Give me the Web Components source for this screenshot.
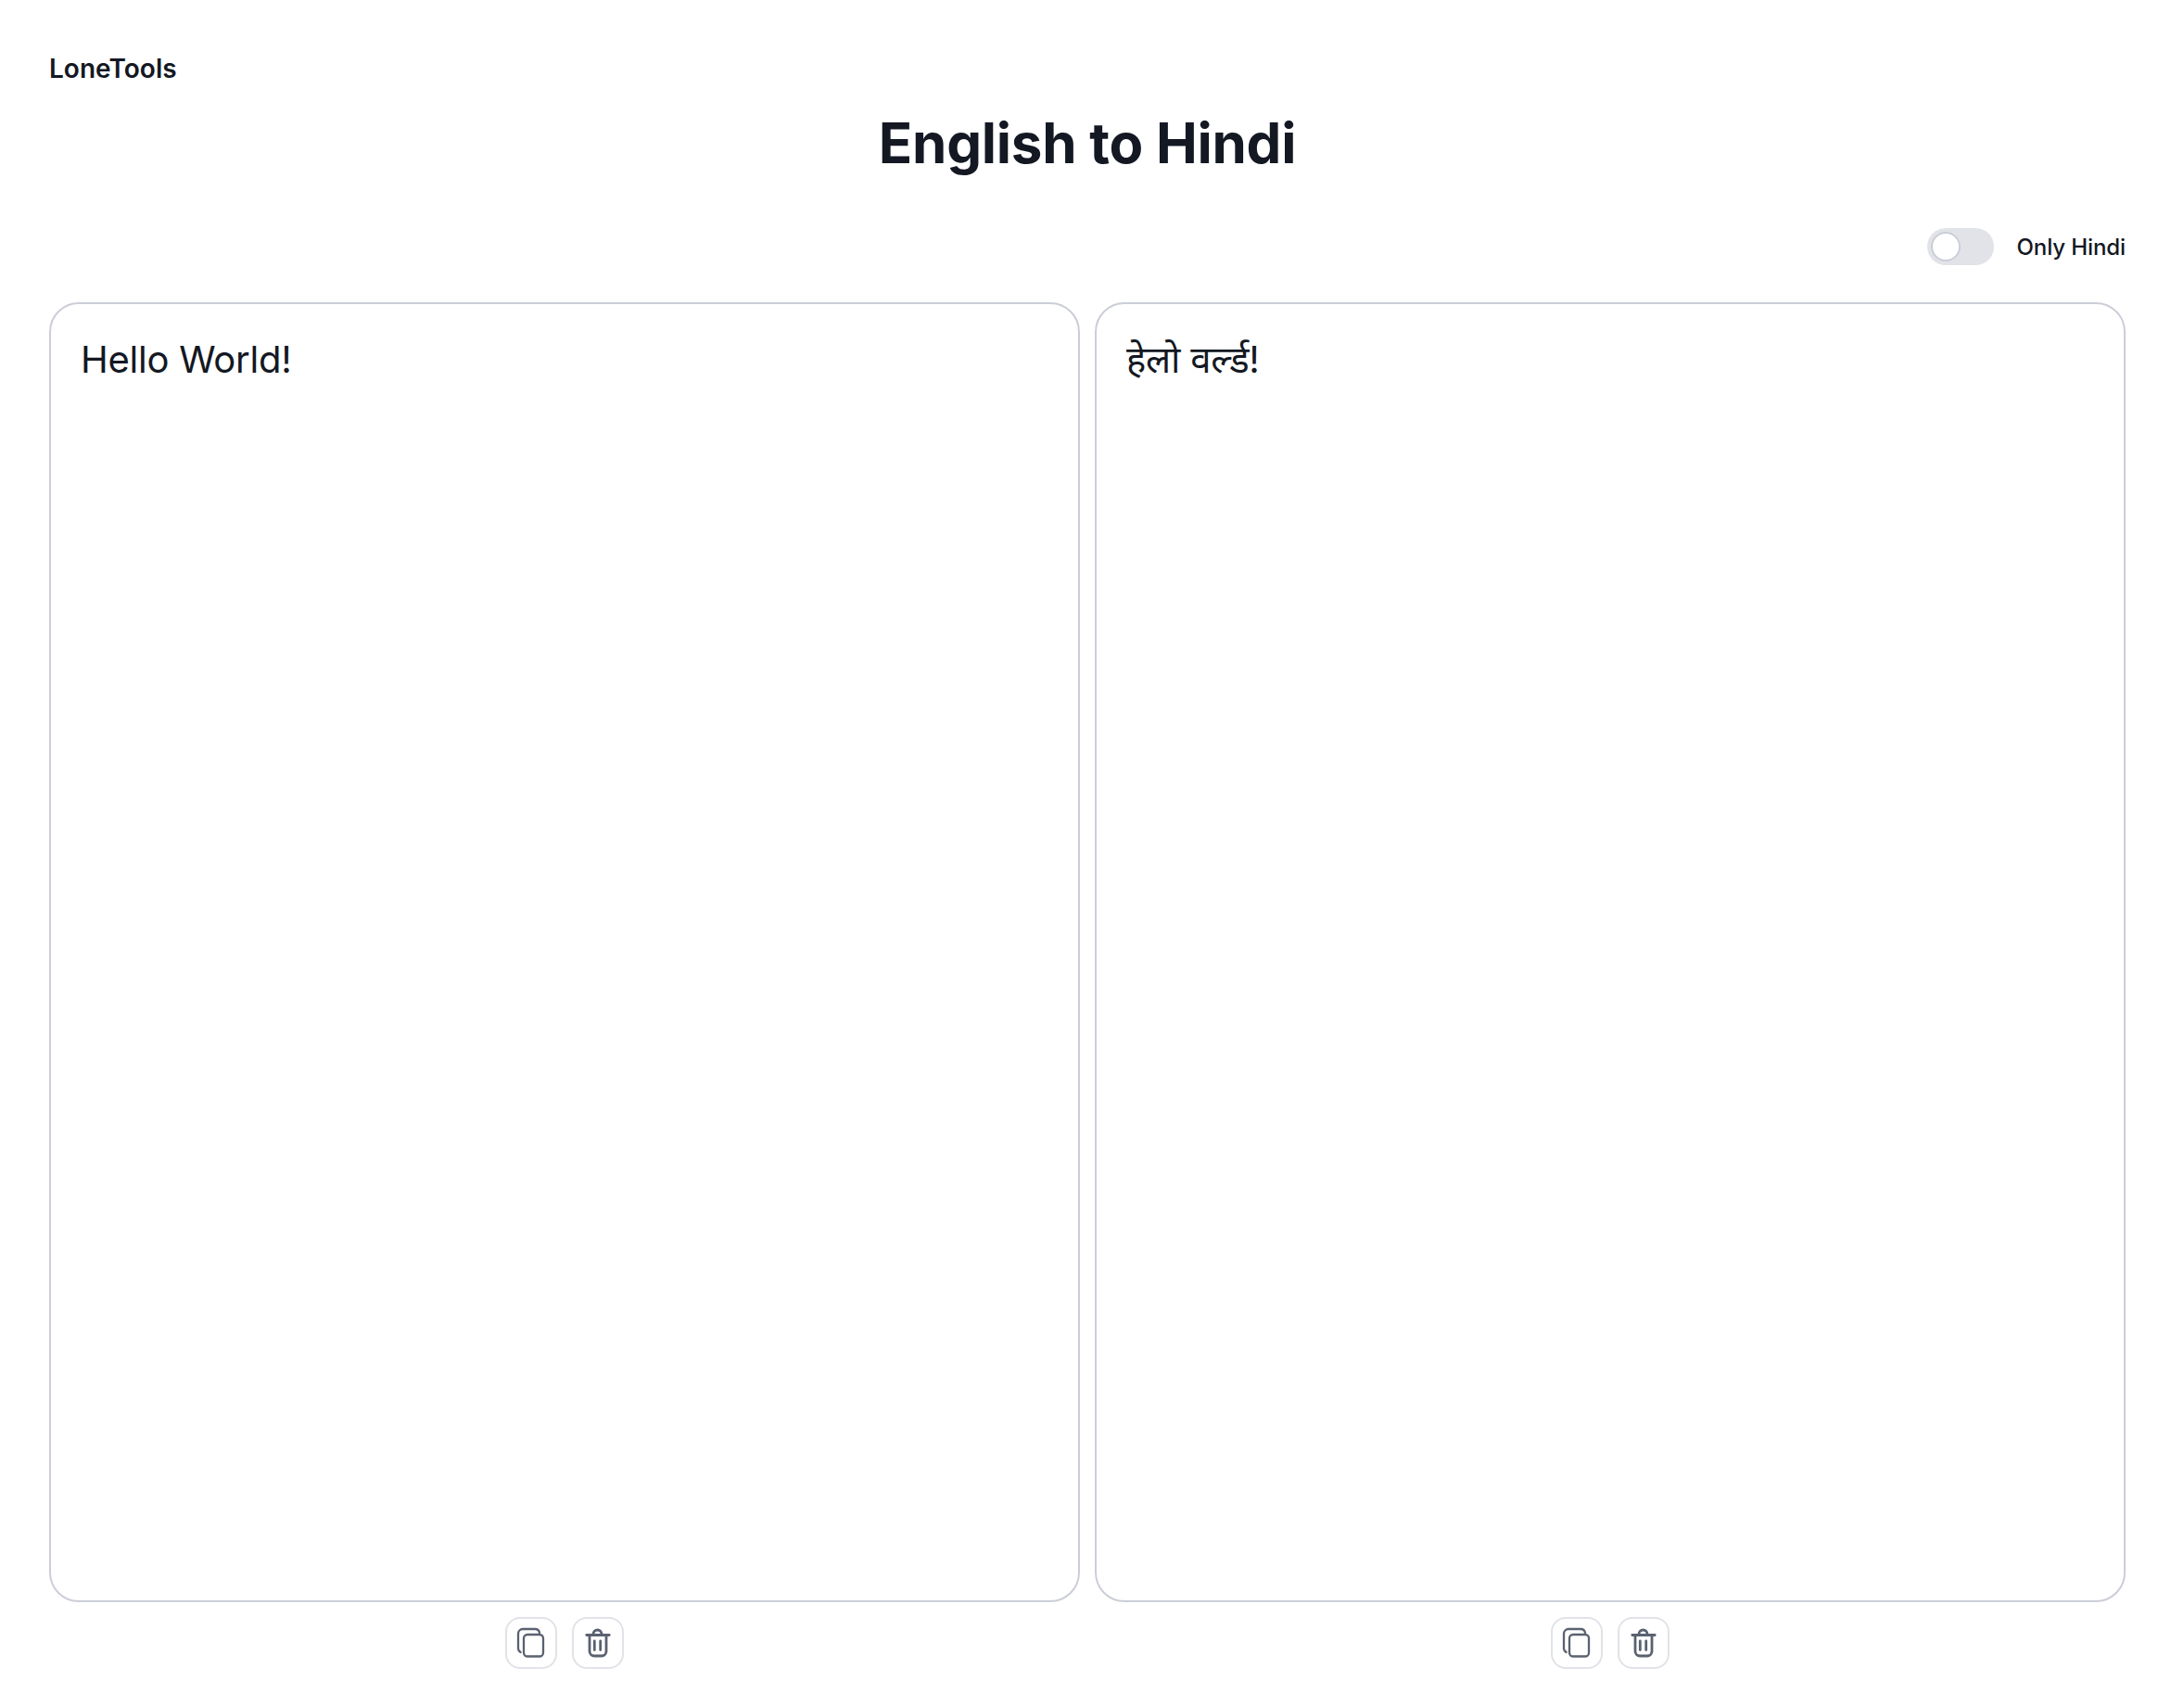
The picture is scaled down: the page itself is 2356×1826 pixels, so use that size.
<!DOCTYPE html>
<html><head><meta charset="utf-8">
<style>
html,body{margin:0;background:#fff;height:100%}
body{font-family:Inter,"Noto Sans",sans-serif;color:#131823}
</style></head><body>
<template id="t-app"><style>
:host{display:flex;flex-direction:column;box-sizing:border-box;height:1826px;padding:56px 63px 26px 53px}
.logo{font-size:28px;line-height:36px;font-weight:600;letter-spacing:.02px}
h1{margin:22px 0 0;text-align:center;font-size:60px;line-height:80px;font-weight:700;color:#131823;letter-spacing:-.25px}
.bar{display:flex;justify-content:flex-end;margin-top:52px}
.grid{flex:1;display:grid;grid-template-columns:1fr 1fr;gap:16px;margin-top:40px;min-height:0}
</style>
<div class="logo">LoneTools</div>
<h1>English to Hindi</h1>
<div class="bar"><lt-toggle>Only Hindi</lt-toggle></div>
<div class="grid">
<lt-panel>Hello World!</lt-panel>
<lt-panel>हेलो वर्ल्ड!</lt-panel>
</div></template>
<template id="t-toggle"><style>
:host{display:flex;align-items:center;gap:25px;height:40px;font-size:24px;font-weight:500;color:#131823;letter-spacing:-.1px}
.track{width:72px;height:40px;border-radius:20px;background:#e1e3e8;position:relative;box-sizing:border-box}
.knob{position:absolute;left:4px;top:4px;width:32px;height:32px;box-sizing:border-box;border-radius:50%;background:#fff;border:2px solid #cbced6}
</style><div class="track"><div class="knob"></div></div><span><slot></slot></span></template>
<template id="t-panel"><style>
:host{display:flex;flex-direction:column;min-width:0;min-height:0}
.box{flex:1;box-sizing:border-box;border:2px solid #cbced6;border-radius:32px;padding:32px;font-size:40px;line-height:56px;letter-spacing:-.25px;color:#131823;font-family:Inter,"Noto Sans Devanagari","Noto Sans",sans-serif}
.actions{display:flex;justify-content:center;gap:16px;margin-top:16px}
</style><div class="box"><slot></slot></div>
<div class="actions"><lt-icon-button kind="copy"></lt-icon-button><lt-icon-button kind="trash"></lt-icon-button></div></template>
<script>
const icons={copy:'<svg width="36" height="36" viewBox="0 0 36 36" fill="none" stroke="#5a6170" stroke-width="2.300" stroke-linecap="round" stroke-linejoin="round"><rect x="10" y="9" width="21" height="23.500" rx="4"/><path d="M6.500 28C5 27 4 25.500 4 24V8a5 5 0 0 1 5-5h13a5 5 0 0 1 5 4"/></svg>',
trash:'<svg width="36" height="36" viewBox="0 0 36 36" fill="none" stroke="#5a6170" stroke-width="2.800" stroke-linecap="round" stroke-linejoin="round"><path d="M5.800 9.500h24.400M9 9.500V27a5 5 0 0 0 5 5h8a5 5 0 0 0 5-5V9.500M13 9.500V8.500a4.500 4.500 0 0 1 9 0v1M14.300 16v9.500M20.700 16v9.500"/></svg>'};
function def(name,tid,init){customElements.define(name,class extends HTMLElement{connectedCallback(){if(this.shadowRoot)return;const r=this.attachShadow({mode:'open'});if(tid)r.appendChild(document.getElementById(tid).content.cloneNode(true));if(init)init(this,r)}})}
def('lt-icon-button',null,(h,r)=>{r.innerHTML='<style>:host{display:flex;width:56px;height:56px;box-sizing:border-box;border:2px solid #e1e3e8;border-radius:16px;align-items:center;justify-content:center;background:#fff}svg{display:block}</style>'+icons[h.getAttribute('kind')]});
def('lt-toggle','t-toggle');
def('lt-panel','t-panel');
def('lt-app','t-app');
</script>
<lt-app></lt-app>
</body></html>
